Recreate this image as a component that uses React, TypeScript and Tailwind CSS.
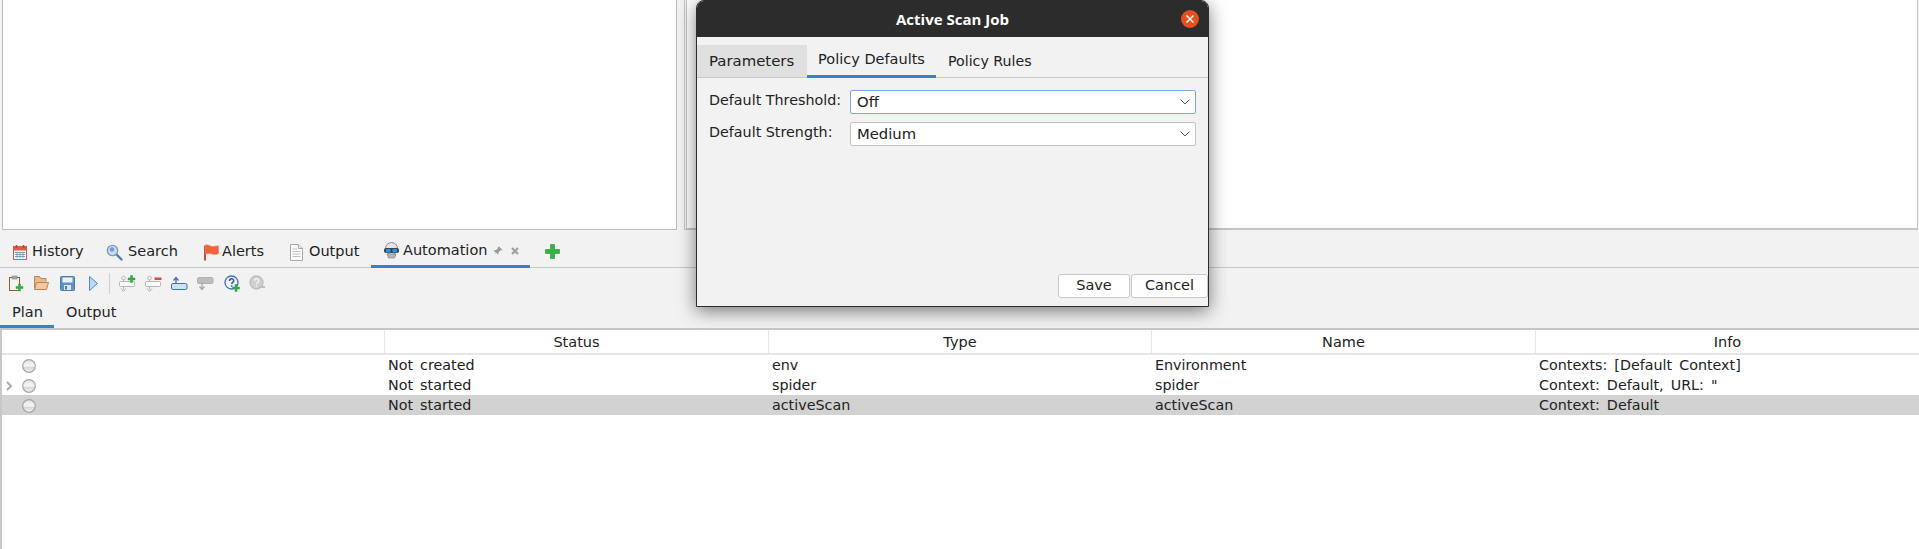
// Imports
import type { ReactNode } from 'react'

// Types
type TabType = {
  label: string
  icon: ReactNode
  width: string
  gap: string
}

type RowType = {
  status: string
  type: string
  name: string
  info: string
  expandable?: boolean
  selected?: boolean
}

// Icons
function CalendarIcon() {
  return (
    <svg width="16" height="17" viewBox="0 0 16 17">
      <rect x="1.500" y="2.500" width="13" height="13" fill="#fff" stroke="#c9624a" />
      <rect x="2" y="3" width="12" height="3.500" fill="#e8573f" />
      <path d="M4.500 1v3M11.500 1v3" stroke="#8a5a4a" strokeWidth="1.500" />
      <path d="M3 8.500h10M3 10.500h10M3 12.500h10M5 7.500v6.500M8 7.500v6.500M11 7.500v6.500" stroke="#7f9fc4" strokeWidth="1" />
    </svg>
  )
}

function SearchIcon() {
  return (
    <svg width="17" height="17" viewBox="0 0 17 17">
      <path d="M10 10l5.500 5.500" stroke="#4f7fb5" strokeWidth="2.400" strokeLinecap="round" />
      <circle cx="6.500" cy="6.500" r="5.200" fill="#c3dcf2" stroke="#8a97a5" strokeWidth="1.300" />
      <circle cx="6" cy="5.500" r="2.300" fill="#6f9fe0" />
    </svg>
  )
}

function FlagIcon() {
  return (
    <svg width="16" height="17" viewBox="0 0 16 17">
      <path d="M2 1.500v15" stroke="#b8452c" strokeWidth="1.800" />
      <path d="M2.500 1c3-.8 5 1.800 7 1.500l6-.8v8c-2 1-5 .8-7 .2s-4-.5-6 .5z" fill="#f2603c" stroke="#f08a6e" strokeWidth=".6" />
    </svg>
  )
}

function PageIcon() {
  return (
    <svg width="13" height="17" viewBox="0 0 13 17">
      <path d="M.5.500h8l4 4v12H.5z" fill="#fff" stroke="#a8a8a8" />
      <path d="M8.500.5v4h4" fill="#e4e4e4" stroke="#a8a8a8" />
      <path d="M2.500 5h5M2.500 7.500h8M2.500 10h8M2.500 12.500h8" stroke="#bdbdbd" />
    </svg>
  )
}

function RobotIcon() {
  return (
    <svg width="17" height="18" viewBox="0 0 17 18">
      <circle cx="8.500" cy="6.500" r="6" fill="#e4e4e4" stroke="#8f8f8f" />
      <rect x="1" y="6" width="15" height="5" rx="2" fill="#39434e" />
      <rect x="3" y="7" width="4.500" height="3.500" fill="#2f8fe0" />
      <rect x="9.500" y="7" width="4.500" height="3.500" fill="#2f8fe0" />
      <path d="M4 12h9l-1.500 4h-6z" fill="#b5b5b5" stroke="#777" strokeWidth=".6" />
    </svg>
  )
}

function PinIcon() {
  return (
    <svg width="10" height="10" viewBox="0 0 10 10">
      <path d="M6 .5l3.500 3.500-1 .5-1-.2-2 2 .2 1.500-1 .7-1.500-2-2.500 3 2-3-2-1.500 .7-1 1.500.2 2-2-.2-1z" fill="#9a9a9a" />
    </svg>
  )
}

function CloseSmallIcon() {
  return (
    <svg width="8" height="8" viewBox="0 0 8 8">
      <path d="M1 1l6 6M7 1l-6 6" stroke="#a0a0a0" strokeWidth="2.200" />
    </svg>
  )
}

function PlusIcon() {
  return (
    <svg width="15" height="16" viewBox="0 0 15 16">
      <path d="M5.500.5h4v5h5v4h-5v5h-4v-5h-5v-4h5z" fill="#2fb344" stroke="#1f9a36" strokeWidth=".6" />
    </svg>
  )
}

function MiniPlus() {
  return <path d="M-1-3.500h2v2.500h2.500v2H1v2.500h-2V1h-2.500v-2H-1z" fill="#2fb344" stroke="#1f8a30" strokeWidth=".4" />
}

function ClipboardIcon() {
  return (
    <svg width="16" height="17" viewBox="0 0 16 17">
      <rect x="1.500" y="2.500" width="10" height="13" fill="#f4f4f0" stroke="#8a5a3a" />
      <rect x="4" y="1" width="5" height="3" fill="#a8a8a8" stroke="#777" strokeWidth=".5" />
      <g transform="translate(11.500 12.500)"><MiniPlus /></g>
    </svg>
  )
}

function FolderIcon() {
  return (
    <svg width="17" height="16" viewBox="0 0 17 16">
      <path d="M1.500 13.500v-12h5l1.500 2h5v3" fill="#e7b98c" stroke="#b98550" />
      <path d="M1.500 14.500l2-7h12l-2 7z" fill="#f0c9a0" stroke="#b98550" />
    </svg>
  )
}

function SaveIcon() {
  return (
    <svg width="15" height="15" viewBox="0 0 15 15">
      <rect x=".5" y=".5" width="14" height="14" rx="1" fill="#5f92c8" stroke="#4a7cb0" />
      <rect x="2.500" y="1.500" width="10" height="5" fill="#eef3f8" />
      <rect x="4" y="9" width="7" height="5" fill="#dfe7ef" />
      <rect x="5" y="10" width="2" height="3.500" fill="#4a7cb0" />
    </svg>
  )
}

function PlayIcon() {
  return (
    <svg width="9" height="15" viewBox="0 0 9 15">
      <path d="M.5.500l8 7-8 7z" fill="#bcd8f2" stroke="#4f8ac4" />
    </svg>
  )
}

function JobShape() {
  return (
    <g stroke="#b5b5b5" fill="#fafafa" strokeWidth="1">
      <rect x=".5" y="6.500" width="15" height="5" rx="1" />
      <path d="M4.500 6.500v-2M4.500 11.500v3" fill="none" />
      <circle cx="4.500" cy="3" r="1.800" />
      <path d="M2 13.500l2.500 3 2.500-3" fill="none" />
    </g>
  )
}

function JobAddIcon() {
  return (
    <svg width="17" height="17" viewBox="0 0 17 17">
      <JobShape />
      <g transform="translate(12.500 4)"><MiniPlus /></g>
    </svg>
  )
}

function JobRemoveIcon() {
  return (
    <svg width="17" height="17" viewBox="0 0 17 17">
      <JobShape />
      <rect x="9.500" y="2.500" width="7" height="2.500" fill="#d9483f" />
    </svg>
  )
}

function JobUpIcon() {
  return (
    <svg width="17" height="17" viewBox="0 0 17 17">
      <rect x=".5" y="8.500" width="15.500" height="6" rx="1.500" fill="#cfe0f5" stroke="#3f6fc0" />
      <path d="M5 9V3M2.500 5.500L5 2.500l2.500 3" fill="none" stroke="#3f6fc0" strokeWidth="1.300" />
    </svg>
  )
}

function JobDownIcon() {
  return (
    <svg width="17" height="17" viewBox="0 0 17 17">
      <rect x=".5" y="2.500" width="15.500" height="6" rx="1.500" fill="#bdbdbd" stroke="#b0b0b0" />
      <path d="M5 8v6M2.500 11.500L5 14.500l2.500-3" fill="none" stroke="#a8a8a8" strokeWidth="1.300" />
    </svg>
  )
}

function HelpIcon({ active }: { active: boolean }) {
  return (
    <svg width="16" height="17" viewBox="0 0 16 17">
      <circle cx="7.500" cy="7.500" r="6.500" fill={active ? '#eef3fb' : '#cfcfcf'} stroke={active ? '#3f6fc0' : '#bdbdbd'} strokeWidth="1.300" />
      <path d="M5.500 6c0-3 4.200-3 4.200-.2 0 1.700-2 1.500-2 3.200M7.700 10.200v1.600" fill="none" stroke={active ? '#2f55a8' : '#f2f2f2'} strokeWidth="1.500" />
      {active ? (
        <g transform="translate(12 13)"><MiniPlus /></g>
      ) : (
        <rect x="10" y="11" width="6" height="2" fill="#bdbdbd" />
      )}
    </svg>
  )
}

function StatusBall() {
  return (
    <svg width="14" height="14" viewBox="0 0 14 14" className="block">
      <defs>
        <linearGradient id="ball" x1="0" y1="0" x2="0" y2="1">
          <stop offset="0" stopColor="#e2e2e2" />
          <stop offset="0.5" stopColor="#f6f6f6" />
          <stop offset="0.62" stopColor="#d8d8d8" />
          <stop offset="1" stopColor="#f4f4f4" />
        </linearGradient>
      </defs>
      <circle cx="7" cy="7" r="6.300" fill="url(#ball)" stroke="#a6a6a6" strokeWidth="1.200" />
    </svg>
  )
}

function Chevron() {
  return (
    <svg width="7" height="10" viewBox="0 0 7 10" className="block">
      <path d="M1 1l4 4-4 4" fill="none" stroke="#a8a8a8" strokeWidth="1.800" />
    </svg>
  )
}

function ComboArrow() {
  return (
    <svg width="10" height="6" viewBox="0 0 10 6">
      <path d="M.5.500L5 5 9.500.5" fill="none" stroke="#555" />
    </svg>
  )
}

// Data
const mainTabs: TabType[] = [
  { label: 'History', icon: <CalendarIcon />, width: 'w-[94px]', gap: 'gap-1' },
  { label: 'Search', icon: <SearchIcon />, width: 'w-[97px]', gap: 'gap-[5px]' },
  { label: 'Alerts', icon: <FlagIcon />, width: 'w-[87px]', gap: 'gap-[3px]' },
]

const rows: RowType[] = [
  { status: 'Not created', type: 'env', name: 'Environment', info: 'Contexts: [Default Context]' },
  { status: 'Not started', type: 'spider', name: 'spider', info: 'Context: Default, URL: "', expandable: true },
  { status: 'Not started', type: 'activeScan', name: 'activeScan', info: 'Context: Default', selected: true },
]

const columns = ['Status', 'Type', 'Name', 'Info']

// Functional Component
export default function App() {
  // Rendering
  return (
    <div className="relative w-[1919px] h-[549px] overflow-hidden bg-[#f2f2f2] text-[14.500px] text-[#222] font-['DejaVu_Sans',sans-serif]">
      {/* Top panes */}
      <div className="flex h-[230px] gap-[7px] pl-[2px] pr-[1px]">
        <div className="w-[675px] bg-white border border-[#bdbdbd] border-t-0" />
        <div className="flex-1 pl-px border-l border-b border-[#c4c4c4]">
          <div className="h-full bg-white border border-[#c4c4c4] border-t-0" />
        </div>
      </div>

      {/* Main tabs */}
      <div className="flex h-[38px] items-stretch border-b border-[#c8c8c8]">
        <div className="w-[12px]" />
        {mainTabs.map((tab) => (
          <div key={tab.label} className={`flex items-center pt-[7px] ${tab.gap} ${tab.width}`}>
            {tab.icon}
            <span>{tab.label}</span>
          </div>
        ))}
        <div className="flex items-center pt-[7px] gap-[6px] w-[81px]">
          <PageIcon />
          <span>Output</span>
        </div>
        <div className="flex items-center w-[159px] pl-[12px] pt-[7px] gap-[3px] border-b-[3px] border-[#3f7fc9] mb-[-1px]">
          <RobotIcon />
          <span>Automation</span>
          <span className="ml-[3px]"><PinIcon /></span>
          <span className="ml-[5px]"><CloseSmallIcon /></span>
        </div>
        <div className="flex items-center pt-[7px] ml-[15px]">
          <PlusIcon />
        </div>
      </div>

      {/* Toolbar */}
      <div className="flex items-center h-[30px] pl-[8px]">
        <div className="w-[25px]"><ClipboardIcon /></div>
        <div className="w-[27px]"><FolderIcon /></div>
        <div className="w-[29px]"><SaveIcon /></div>
        <div className="w-[20px]"><PlayIcon /></div>
        <div className="w-px h-[21px] bg-[#cfcfcf] mr-[9px]" />
        <div className="w-[26px]"><JobAddIcon /></div>
        <div className="w-[26px]"><JobRemoveIcon /></div>
        <div className="w-[26px]"><JobUpIcon /></div>
        <div className="w-[27px]"><JobDownIcon /></div>
        <div className="w-[25px]"><HelpIcon active /></div>
        <div className="w-[25px]"><HelpIcon active={false} /></div>
      </div>

      {/* Plan tabs */}
      <div className="flex h-[30px]">
        <div className="flex items-center w-[54px] pl-[12px] pt-[3px] border-b-[3px] border-[#3f7fc9]">Plan</div>
        <div className="flex items-center pl-[12px] pt-[3px] pb-[3px]">Output</div>
      </div>

      {/* Table */}
      <div className="border-t-2 border-l-2 border-[#c8c8c8] bg-white h-[221px]">
        <div className="grid grid-cols-[383px_384px_383px_384px_1fr] h-[25px] border-b-2 border-[#e6e6e6]">
          <div className="border-r border-[#e6e6e6]" />
          {columns.map((column) => (
            <div key={column} className="flex items-center justify-center pt-[2px] border-r border-[#e6e6e6] last:border-r-0">
              {column}
            </div>
          ))}
        </div>
        {rows.map((row) => (
          <div
            key={row.type}
            className={`grid grid-cols-[383px_384px_383px_384px_1fr] h-[20px] items-center text-[14.300px] [word-spacing:2.500px] ${row.selected ? 'bg-[#d2d2d2]' : ''}`}
          >
            <div className="flex items-center pl-[4px] gap-[9px]">
              <span className="w-[7px]">{row.expandable ? <Chevron /> : null}</span>
              <StatusBall />
            </div>
            <div className="pl-[3px]">{row.status}</div>
            <div className="pl-[3px]">{row.type}</div>
            <div className="pl-[3px]">{row.name}</div>
            <div className="pl-[3px]">{row.info}</div>
          </div>
        ))}
      </div>

      {/* Dialog */}
      <div className="absolute left-[696px] top-0 w-[513px] h-[307px] flex flex-col rounded-t-[8px] bg-[#f2f2f2] border border-[#2c2c2c] shadow-[0_4px_18px_rgba(0,0,0,0.5)]">
        <div className="relative flex items-center justify-center h-[36px] rounded-t-[7px] bg-[#2c2c2c] text-white text-[15px] font-bold font-['Open_Sans',sans-serif]">
          Active Scan Job
          <span className="absolute right-[9px] top-[9px] flex items-center justify-center w-[18px] h-[18px] rounded-full bg-[#e5501f]">
            <svg width="10" height="10" viewBox="0 0 10 10">
              <path d="M1.500 1.500l7 7M8.500 1.500l-7 7" stroke="#fff" strokeWidth="1.500" />
            </svg>
          </span>
        </div>

        <div className="flex h-[33px] mt-[8px] border-b border-[#c8c8c8]">
          <div className="flex items-center w-[110px] pl-[12px] bg-[#e0e0e0] text-[14.900px]">Parameters</div>
          <div className="flex items-center justify-center w-[129px] border-b-[3px] border-[#3f7fc9] mb-[-1px]">Policy Defaults</div>
          <div className="flex items-center pl-[12px] pt-px text-[14.200px]">Policy Rules</div>
        </div>

        <div className="grid grid-cols-[141px_346px] gap-y-[8px] pt-[12px] pl-[12px] text-[14.300px]">
          <div className="h-[24px] leading-[20px]">Default Threshold:</div>
          <div className="flex items-center justify-between h-[24px] pl-[6px] pr-[5px] bg-white rounded-[2px] border border-[#7fa8e0] text-[14.800px]">
            <span>Off</span>
            <ComboArrow />
          </div>
          <div className="h-[24px] leading-[20px]">Default Strength:</div>
          <div className="flex items-center justify-between h-[24px] pl-[6px] pr-[5px] bg-white rounded-[2px] border border-[#c4c4c4] text-[14.800px]">
            <span>Medium</span>
            <ComboArrow />
          </div>
        </div>

        <div className="mt-auto flex justify-end gap-px pb-[8px]">
          <button className="w-[72px] h-[24px] bg-white rounded-[3px] border border-[#c8c8c8]">Save</button>
          <button className="w-[77px] h-[24px] bg-white rounded-[3px] border border-[#c8c8c8]">Cancel</button>
        </div>
      </div>
    </div>
  )
}
